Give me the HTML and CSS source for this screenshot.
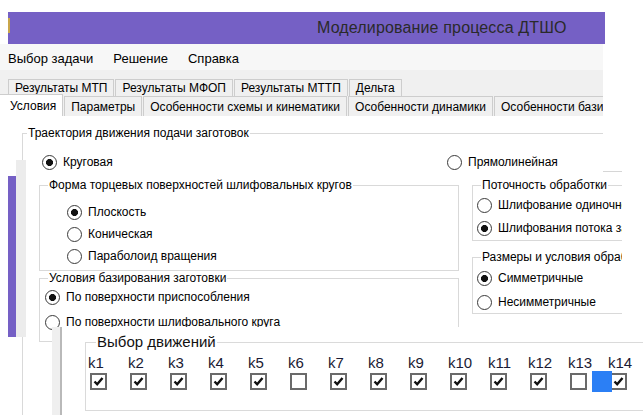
FILE: index.html
```html
<!DOCTYPE html>
<html lang="ru">
<head>
<meta charset="utf-8">
<title>Моделирование процесса ДТШО</title>
<link rel="stylesheet" href="styles.css">
</head>
<body>
<div class="screen">
  <div class="app">
    <header class="titlebar">
      <span class="app-icon"></span>
      <span class="title">Моделирование процесса ДТШО</span>
    </header>
    <nav class="menubar">
      <span>Выбор задачи</span>
      <span>Решение</span>
      <span>Справка</span>
    </nav>
    <div class="tabstrip">
      <div class="tabrow">
        <span class="tab">Результаты МТП</span>
        <span class="tab">Результаты МФОП</span>
        <span class="tab">Результаты МТТП</span>
        <span class="tab">Дельта</span>
      </div>
      <div class="tabrow front">
        <span class="tab active">Условия</span>
        <span class="tab">Параметры</span>
        <span class="tab">Особенности схемы и кинематики</span>
        <span class="tab">Особенности динамики</span>
        <span class="tab">Особенности базирования</span>
      </div>
    </div>
    <main class="page">
      <fieldset class="group g-path">
        <legend>Траектория движения подачи заготовок</legend>
        <div class="path-options">
          <div class="opt checked">Круговая</div>
          <div class="opt">Прямолинейная</div>
        </div>
        <div class="columns">
          <div class="col col-left">
            <fieldset class="group g-shape">
              <legend>Форма торцевых поверхностей шлифовальных кругов</legend>
              <div class="opts">
                <div class="opt checked">Плоскость</div>
                <div class="opt">Коническая</div>
                <div class="opt">Параболоид вращения</div>
              </div>
            </fieldset>
            <fieldset class="group g-base">
              <legend>Условия базирования заготовки</legend>
              <div class="opts">
                <div class="opt checked">По поверхности приспособления</div>
                <div class="opt">По поверхности шлифовального круга</div>
              </div>
            </fieldset>
          </div>
          <div class="col col-right">
            <fieldset class="group g-flow">
              <legend>Поточность обработки</legend>
              <div class="opts">
                <div class="opt">Шлифование одиночной заготовки</div>
                <div class="opt checked">Шлифования потока заготовок</div>
              </div>
            </fieldset>
            <fieldset class="group g-size">
              <legend>Размеры и условия обработки</legend>
              <div class="opts">
                <div class="opt checked">Симметричные</div>
                <div class="opt">Несимметричные</div>
              </div>
            </fieldset>
          </div>
        </div>
      </fieldset>
    </main>
  </div>

  <div class="edge-gray"></div>
  <div class="edge-purple"></div>
  <div class="edge-right"></div>

  <section class="motions">
    <fieldset class="group g-motions">
      <legend>Выбор движений</legend>
      <div class="kgrid">
        <div class="kcol"><span class="klabel">k1</span><span class="cb on"><svg viewBox="0 0 13 13"><path d="M2.5 6.5 L5.2 9.3 L10.5 3"/></svg></span></div>
        <div class="kcol"><span class="klabel">k2</span><span class="cb on"><svg viewBox="0 0 13 13"><path d="M2.5 6.5 L5.2 9.3 L10.5 3"/></svg></span></div>
        <div class="kcol"><span class="klabel">k3</span><span class="cb on"><svg viewBox="0 0 13 13"><path d="M2.5 6.5 L5.2 9.3 L10.5 3"/></svg></span></div>
        <div class="kcol"><span class="klabel">k4</span><span class="cb on"><svg viewBox="0 0 13 13"><path d="M2.5 6.5 L5.2 9.3 L10.5 3"/></svg></span></div>
        <div class="kcol"><span class="klabel">k5</span><span class="cb on"><svg viewBox="0 0 13 13"><path d="M2.5 6.5 L5.2 9.3 L10.5 3"/></svg></span></div>
        <div class="kcol"><span class="klabel">k6</span><span class="cb"></span></div>
        <div class="kcol"><span class="klabel">k7</span><span class="cb on"><svg viewBox="0 0 13 13"><path d="M2.5 6.5 L5.2 9.3 L10.5 3"/></svg></span></div>
        <div class="kcol"><span class="klabel">k8</span><span class="cb on"><svg viewBox="0 0 13 13"><path d="M2.5 6.5 L5.2 9.3 L10.5 3"/></svg></span></div>
        <div class="kcol"><span class="klabel">k9</span><span class="cb on"><svg viewBox="0 0 13 13"><path d="M2.5 6.5 L5.2 9.3 L10.5 3"/></svg></span></div>
        <div class="kcol"><span class="klabel">k10</span><span class="cb on"><svg viewBox="0 0 13 13"><path d="M2.5 6.5 L5.2 9.3 L10.5 3"/></svg></span></div>
        <div class="kcol"><span class="klabel">k11</span><span class="cb on"><svg viewBox="0 0 13 13"><path d="M2.5 6.5 L5.2 9.3 L10.5 3"/></svg></span></div>
        <div class="kcol"><span class="klabel">k12</span><span class="cb on"><svg viewBox="0 0 13 13"><path d="M2.5 6.5 L5.2 9.3 L10.5 3"/></svg></span></div>
        <div class="kcol"><span class="klabel">k13</span><span class="cb"></span></div>
        <div class="kcol"><span class="klabel">k14</span><span class="cb on"><svg viewBox="0 0 13 13"><path d="M2.5 6.5 L5.2 9.3 L10.5 3"/></svg></span></div>
      </div>
      <span class="focus-mark"></span>
    </fieldset>
  </section>
</div>
</body>
</html>
```

FILE: styles.css
```css
* { box-sizing: border-box; }

html, body { margin: 0; }

body {
  background: #fff;
  font-family: "Liberation Sans", Arial, sans-serif;
  font-size: 12px;
  color: #000;
}

.screen {
  position: relative;
  width: 643px;
  height: 415px;
  overflow: hidden;
}

.app {
  width: 603px;
  padding-top: 12px;
}

/* window caption */
.titlebar {
  margin-left: 8px;
  width: 597px;
  height: 32px;
  background: #7560c5;
  display: flex;
  align-items: center;
}

.app-icon {
  align-self: flex-start;
  margin-top: 6px;
  width: 2px;
  height: 15px;
  background: #c9a64a;
}

.title {
  margin-left: 307px;
  font-size: 16px;
  letter-spacing: 0.15px;
  color: #2a2a2a;
  white-space: nowrap;
}

/* menu */
.menubar {
  height: 26px;
  background: #f7f7f7;
  display: flex;
  align-items: center;
  gap: 20px;
  padding: 3px 0 0 8px;
  font-size: 13px;
}

/* tabs */
.tabstrip {
  background: #f0f0f0;
  padding: 9px 0 0 8px;
  overflow: hidden;
}

.tabrow {
  display: flex;
  gap: 1px;
  height: 17px;
  white-space: nowrap;
}

.tabrow.front {
  height: 20px;
  align-items: flex-end;
}

.tab {
  flex: none;
  height: 100%;
  padding: 0 6px;
  border: 1px solid #cdcdcd;
  border-bottom: none;
  background: #f0f0f0;
  display: flex;
  align-items: center;
}

.front .tab { height: 20px; }

.front .tab.active {
  height: 22px;
  margin-left: -8px;
  padding: 0 6px 0 10px;
  border-left: none;
  background: #fff;
  position: relative;
  z-index: 1;
}

/* tab page */
.page {
  width: 622px;
  height: 299px;
  overflow: hidden;
  background: #fff;
  padding: 10px 0 0 22px;
  white-space: nowrap;
}

.group {
  margin: 0;
  padding: 0;
  min-width: 0;
  border: 1px solid #d9d9d9;
}

.group > legend {
  padding: 0 1px;
  margin-left: 8px;
  line-height: 14px;
}

.g-path { width: 660px; height: 320px; }
.g-path > legend { margin-left: 4px; }

.path-options {
  display: grid;
  grid-template-columns: 405px auto;
  padding-left: 19px;
  margin-top: 14px;
}

.opt {
  display: flex;
  align-items: center;
  gap: 6px;
  height: 16px;
}

.opt::before {
  content: "";
  flex: none;
  width: 13px;
  height: 13px;
  border: 1px solid #3a3a3a;
  border-radius: 50%;
  background: #fff;
}

.opt.checked::before {
  background: radial-gradient(circle, #111 0 3.2px, #fff 3.8px);
}

.opts {
  display: flex;
  flex-direction: column;
}

.columns {
  display: flex;
  gap: 13px;
  margin-top: 8px;
  padding-left: 16px;
}

.col {
  flex: none;
  display: flex;
  flex-direction: column;
}

.col-left { width: 420px; }
.col-right { width: 190px; }

.g-shape { padding-bottom: 3px; }
.g-shape .opts { margin-top: 9px; padding-left: 27px; }
.g-shape .opt { height: 22px; }

.g-base { padding-bottom: 11px; }
.g-base .opts { margin-top: 4px; gap: 9px; padding-left: 5px; }

.g-flow { padding-bottom: 4px; }
.g-flow .opts { margin-top: 5px; gap: 7px; padding-left: 4px; }

.g-size { margin-top: 9px; padding-bottom: 3px; }
.g-size .opts { margin-top: 6px; gap: 8px; padding-left: 4px; }

/* pieces of the neighbouring window */
.edge-gray {
  position: absolute;
  left: 16px;
  top: 160px;
  width: 10px;
  height: 177px;
  background: #ececec;
}

.edge-purple {
  position: absolute;
  left: 8px;
  top: 176px;
  width: 8px;
  height: 161px;
  background: #7560c5;
}

/* the upper page stops at the window edge; the lower pane runs a little further */
.edge-right {
  position: absolute;
  left: 603px;
  top: 116px;
  width: 19px;
  height: 56px;
  background: #fff;
  border-bottom: 1px solid #d6d6d6;
}

/* motion selection panel */
.motions {
  position: absolute;
  left: 52px;
  top: 327px;
  right: 0;
  bottom: 0;
  overflow: hidden;
  background: linear-gradient(to right, #efefef 0 8px, #b9b9b9 8px 10px, #fff 10px);
  padding: 6px 0 0 33px;
}

.g-motions {
  position: relative;
  width: 640px;
  height: 78px;
  border-color: #dadada;
}

.g-motions > legend {
  margin-left: 10px;
  font-size: 15px;
  line-height: 18px;
  color: #111;
}

.kgrid {
  display: grid;
  grid-template-columns: repeat(14, 40px);
  padding-left: 2px;
  margin-top: 3px;
}

.kcol {
  display: flex;
  flex-direction: column;
  align-items: flex-start;
}

.klabel {
  font-size: 15px;
  line-height: 17px;
  color: #1b1b33;
}

.cb {
  margin: 2px 0 0 2px;
  width: 17px;
  height: 17px;
  border: 2px solid #6a6a6a;
  background: #fff;
  display: flex;
}

.cb svg {
  width: 13px;
  height: 13px;
  fill: none;
  stroke: #111;
  stroke-width: 2.4;
}

.focus-mark {
  position: absolute;
  left: 506px;
  top: 20px;
  width: 20px;
  height: 21px;
  background: #2b7ff5;
}
```
